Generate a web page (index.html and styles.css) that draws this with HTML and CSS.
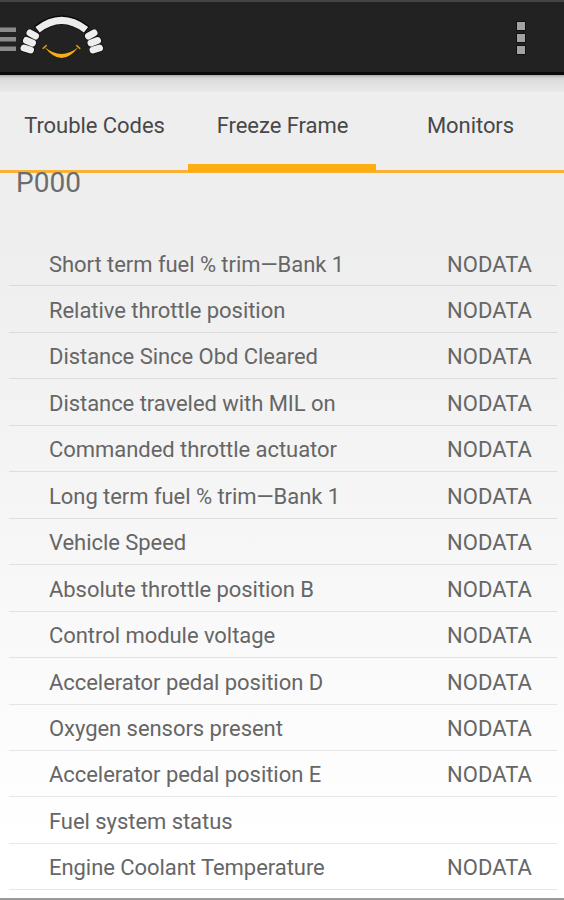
FILE: index.html
```
<!DOCTYPE html>
<html lang="en">
<head>
<meta charset="utf-8">
<title>Freeze Frame</title>
<link rel="stylesheet" href="styles.css">
</head>
<body>
<header class="bar">
  <svg class="brand" width="110" height="72" viewBox="0 0 110 72" aria-hidden="true">
    <path d="M0 29.800H16M0 39.300H16M0 48.800H16" stroke="#8b8b8b" stroke-width="4.400"/>
    <path d="M36.500 30Q61.500 10 87 30" fill="none" stroke="#0a0a0a" stroke-width="9"/>
    <path d="M37.500 29.700Q61.500 11 86 29.700" fill="none" stroke="#ededed" stroke-width="7"/>
    <g stroke="#0a0a0a" stroke-width="8.500" stroke-linecap="round">
      <path d="M30 33L35.500 36M26.500 40.500L32.500 43M24 48L30.500 50"/>
      <path d="M94 33L88.500 36M97.500 40.500L91 43M99.500 48L93 50"/>
    </g>
    <g stroke="#ededed" stroke-width="7" stroke-linecap="round">
      <path d="M30 33L35.500 36M26.500 40.500L32.500 43M24 48L30.500 50"/>
      <path d="M94 33L88.500 36M97.500 40.500L91 43M99.500 48L93 50"/>
    </g>
    <path d="M44.500 47Q61.500 61 78.500 47Q61.500 69 44.500 47Z" fill="#f9ad16"/>
    <path d="M43.200 48.300L46.300 45.500M79.800 48.300L76.700 45.500" stroke="#d6951b" stroke-width="1.600" stroke-linecap="round"/>
  </svg>
  <div class="more"><i></i><i></i><i></i></div>
</header>
<nav class="tabs">
  <div class="tab"><span>Trouble Codes</span></div>
  <div class="tab active"><span>Freeze Frame</span></div>
  <div class="tab"><span>Monitors</span></div>
</nav>
<main>
  <h1>P000</h1>
  <ul class="list">
    <li><span>Short term fuel % trim—Bank 1</span><b>NODATA</b></li>
    <li><span>Relative throttle position</span><b>NODATA</b></li>
    <li><span>Distance Since Obd Cleared</span><b>NODATA</b></li>
    <li><span>Distance traveled with MIL on</span><b>NODATA</b></li>
    <li><span>Commanded throttle actuator</span><b>NODATA</b></li>
    <li><span>Long term fuel % trim—Bank 1</span><b>NODATA</b></li>
    <li><span>Vehicle Speed</span><b>NODATA</b></li>
    <li><span>Absolute throttle position B</span><b>NODATA</b></li>
    <li><span>Control module voltage</span><b>NODATA</b></li>
    <li><span>Accelerator pedal position D</span><b>NODATA</b></li>
    <li><span>Oxygen sensors present</span><b>NODATA</b></li>
    <li><span>Accelerator pedal position E</span><b>NODATA</b></li>
    <li><span>Fuel system status</span></li>
    <li><span>Engine Coolant Temperature</span><b>NODATA</b></li>
  </ul>
</main>
</body>
</html>
```
FILE: styles.css
```
* { box-sizing: border-box; }
body {
  margin: 0;
  height: 900px;
  overflow: hidden;
  display: flex;
  flex-direction: column;
  font-family: Roboto, "Liberation Sans", sans-serif;
  background: linear-gradient(#eee 0, #eee 240px, #fff 840px);
  border-bottom: 2px solid #999;
}
.bar {
  flex: none;
  height: 75px;
  display: flex;
  justify-content: space-between;
  background: #222;
  border-top: 2px solid #444;
  border-bottom: 3px solid #0a0a0a;
}
.brand { display: block; margin-top: -2px; }
.more {
  display: flex;
  flex-direction: column;
  gap: 4px;
  margin: 20px 39px 0 0;
}
.more i {
  width: 8px;
  height: 8px;
  background: #a2a2a2;
  outline: 1px solid #111;
}
.tabs {
  flex: none;
  height: 98px;
  display: grid;
  grid-template-columns: repeat(3, 1fr);
  padding-top: 17px;
  background: linear-gradient(#aaa 0, #d5d5d5 3px, #dfdfdf 6px, #e7e7e7 16px, #eee 17px);
  border-bottom: 3px solid #f9b233;
}
.tab {
  display: flex;
  justify-content: center;
  padding: 21px 0 0 1px;
  line-height: 26px;
  font-size: 22px;
  letter-spacing: -0.05px;
  color: #484848;
  white-space: nowrap;
}
.active {
  border-bottom: 6px solid #ffae12;
  box-shadow: 0 2px #ffae12;
}
h1 {
  margin: 0;
  height: 67px;
  padding-left: 16px;
  font-size: 28px;
  line-height: 20px;
  font-weight: 400;
  color: #6c6c6c;
}
.list {
  list-style: none;
  margin: 0;
  padding: 0 7px 0 9px;
}
.list li {
  height: 46.46px;
  display: flex;
  justify-content: space-between;
  padding: 10.5px 25px 0 40px;
  border-bottom: 1.500px solid rgba(0, 0, 0, 0.09);
  font-size: 22px;
  line-height: 28px;
  letter-spacing: -0.05px;
  color: #666;
  white-space: nowrap;
}
.list b { font-weight: 400; letter-spacing: 0.05px; }
```
